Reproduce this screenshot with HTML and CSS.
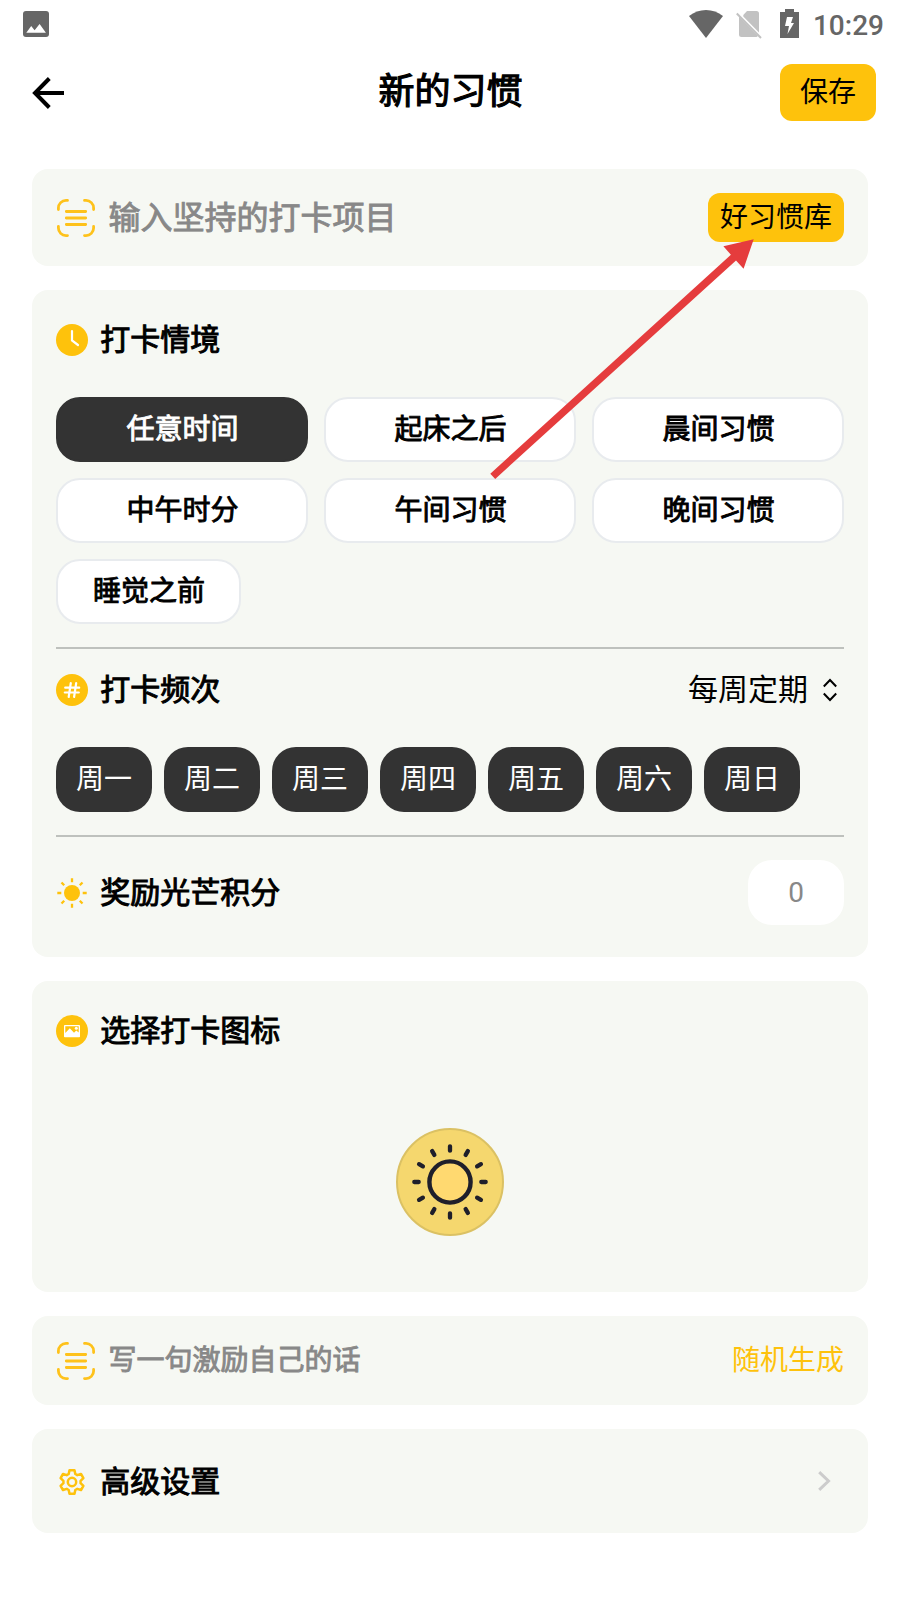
FILE: index.html
```html
<!DOCTYPE html>
<html lang="zh-CN">
<head>
  <meta charset="UTF-8" />
  <meta name="viewport" content="width=device-width, initial-scale=1.0"/>
  <title>新的习惯</title>
  <link rel="stylesheet" href="styles.css">
</head>
<body>

  <div class="status-bar">
    <svg width="26" height="26" viewBox="0 0 26 26">
      <rect width="26" height="26" rx="3" fill="#666"/>
      <path d="M3.300 21.700 8.200 15l3.400 4.200L16.600 13l6.300 8.700z" fill="#fff"/>
    </svg>
    <div class="status-right">
      <svg class="wifi" width="34" height="28" viewBox="0 0 34 28">
        <path d="M0 6Q7.500 0 17 0T34 6L17 28z" fill="#666"/>
      </svg>
      <svg class="sim" width="26" height="28" viewBox="0 0 26 28">
        <path d="M11 0h9.500a2.500 2.500 0 0 1 2.500 2.500V21.600L7.300 5.500V4zM3 5.500 22 25a3 3 0 0 1-1.500 1H5.500A2.500 2.500 0 0 1 3 23.500z" fill="#c2c2c2"/>
        <path d="M.8 2.500 25 27" stroke="#c2c2c2" stroke-width="2"/>
      </svg>
      <svg class="battery" width="19" height="29" viewBox="0 0 19 29">
        <path d="M0 3h5V0h9v3h5v26H0z" fill="#666"/>
        <path d="M7 8h6L11 14h3L7.500 25 9 17H5z" fill="#fff"/>
      </svg>
      <span class="time">10:29</span>
    </div>
  </div>

  <header class="header">
    <svg width="32" height="32" viewBox="0 0 32 32" fill="none" stroke="#000" stroke-width="4">
      <path d="M17.300 1.500 3 16l14.300 14.500M3 16h29"/>
    </svg>
    <h1>新的习惯</h1>
    <button class="save">保存</button>
  </header>

  <main class="container">
    <section class="card input-card">
      <svg class="scan" width="40" height="40" viewBox="0 0 40 40">
        <path d="M2.400 11.500V10A7.600 7.600 0 0 1 10 2.400h1.500M28.500 2.400H30A7.600 7.600 0 0 1 37.600 10v1.500M37.600 28.500V30A7.600 7.600 0 0 1 30 37.600h-1.500M11.500 37.600H10A7.600 7.600 0 0 1 2.400 30v-1.500M10.300 13.500h19.400M10.300 20h19.400M10.300 26.500h19.400"/>
      </svg>
      <span class="hint hint-big">输入坚持的打卡项目</span>
      <button class="library">好习惯库</button>
    </section>

    <section class="card settings">
      <div class="heading">
        <svg width="32" height="32" viewBox="0 0 32 32">
          <circle cx="16" cy="16" r="16" fill="#fec20c"/>
          <path d="M16 7v9.500l6 4.500" fill="none" stroke="#fff" stroke-width="2.200" stroke-linecap="round"/>
        </svg>
        <h2>打卡情境</h2>
      </div>
      <div class="scenes">
        <span class="chip active">任意时间</span>
        <span class="chip">起床之后</span>
        <span class="chip">晨间习惯</span>
        <span class="chip">中午时分</span>
        <span class="chip">午间习惯</span>
        <span class="chip">晚间习惯</span>
        <span class="chip last">睡觉之前</span>
      </div>

      <hr>

      <div class="heading heading-freq">
        <svg width="32" height="32" viewBox="0 0 32 32">
          <circle cx="16" cy="16" r="16" fill="#fec20c"/>
          <path d="M14.800 9 12.700 23M20.200 9 18.100 23M9.200 13.700h14M8.800 18.500h14" stroke="#fff" stroke-width="2.200" stroke-linecap="round"/>
        </svg>
        <h2>打卡频次</h2>
        <span class="period">每周定期</span>
        <svg class="updown" width="14" height="24" viewBox="0 0 14 24" fill="none" stroke="#000" stroke-width="2">
          <path d="M.8 8.500 7 2l6.200 6.500M.8 15.500 7 22l6.200-6.500"/>
        </svg>
      </div>
      <div class="days">
        <span class="day">周一</span>
        <span class="day">周二</span>
        <span class="day">周三</span>
        <span class="day">周四</span>
        <span class="day">周五</span>
        <span class="day">周六</span>
        <span class="day">周日</span>
      </div>

      <hr>

      <div class="heading heading-points">
        <svg width="32" height="32" viewBox="0 0 32 32">
          <circle cx="16" cy="16" r="8" fill="#fec20c"/>
          <path d="M16 1.300v4M16 26.700v4M1.300 16h4M26.700 16h4M5.500 5.500l2.700 2.700M23.800 23.800l2.700 2.700M5.500 26.500l2.700-2.700M23.800 8.200l2.700-2.700" stroke="#fec20c" stroke-width="2.300"/>
        </svg>
        <h2>奖励光芒积分</h2>
        <span class="points">0</span>
      </div>
    </section>

    <section class="card icon-card">
      <div class="heading">
        <svg width="32" height="32" viewBox="0 0 32 32">
          <circle cx="16" cy="16" r="16" fill="#fec20c"/>
          <rect x="8" y="10" width="16" height="12.300" rx=".8" fill="#fff"/>
          <path d="M9.300 11.200h13.400v6.300L20.300 15.600l-2.300 2.200-4.200-4.600-4.500 4.800z" fill="#fec20c"/>
          <circle cx="20.300" cy="13.300" r="1.500" fill="#fff"/>
        </svg>
        <h2>选择打卡图标</h2>
      </div>
      <svg class="habit-icon" width="108" height="108" viewBox="-54 -54 108 108">
        <circle r="53" fill="#f5d76e" stroke="#dbc163" stroke-width="2"/>
        <circle r="20.600" fill="#ffd970" stroke="#1f1f2b" stroke-width="4.400"/>
        <g stroke="#1f1f2b" stroke-width="4.300" stroke-linecap="round">
          <path d="M0-35.700V-31.300M0 35.700V31.300M-35.700 0H-31.300M35.700 0H31.300"/>
          <path d="M0-35.700V-31.300M0 35.700V31.300M-35.700 0H-31.300M35.700 0H31.300" transform="rotate(30)"/>
          <path d="M0-35.700V-31.300M0 35.700V31.300M-35.700 0H-31.300M35.700 0H31.300" transform="rotate(60)"/>
        </g>
      </svg>
    </section>

    <section class="card motto-card">
      <svg class="scan" width="40" height="40" viewBox="0 0 40 40">
        <path d="M2.400 11.500V10A7.600 7.600 0 0 1 10 2.400h1.500M28.500 2.400H30A7.600 7.600 0 0 1 37.600 10v1.500M37.600 28.500V30A7.600 7.600 0 0 1 30 37.600h-1.500M11.500 37.600H10A7.600 7.600 0 0 1 2.400 30v-1.500M10.300 13.500h19.400M10.300 20h19.400M10.300 26.500h19.400"/>
      </svg>
      <span class="hint">写一句激励自己的话</span>
      <span class="random">随机生成</span>
    </section>

    <section class="card more-card">
      <div class="heading">
        <svg class="gear" width="32" height="32" viewBox="-16 -16 32 32" fill="none" stroke="#fec20c" stroke-width="2.500" stroke-linejoin="round">
          <path d="M-3.300-8-2.500-11.800H2.500L3.300-8 5.280-6.860 9-8 11.400-3.900 8.580-1.140V1.140L11.400 3.900 9 8 5.280 6.860 3.300 8 2.500 11.800H-2.500L-3.300 8-5.280 6.860-9 8-11.400 3.900-8.580 1.140V-1.140L-11.400-3.900-9-8-5.280-6.860z"/>
          <circle r="4.200"/>
        </svg>
        <h2>高级设置</h2>
        <svg class="chevron" width="13" height="20" viewBox="0 0 13 20" fill="none" stroke="#ccc" stroke-width="3">
          <path d="M1.200 1.200 10.500 10l-9.300 8.800"/>
        </svg>
      </div>
    </section>
  </main>

  <!-- pointer to the habit library button -->
  <svg class="pointer" width="270" height="244" viewBox="488 237 270 244">
    <path d="M490.300 473.700 730.900 254.700 723.400 246.300 753.700 239.300 743.600 268.700 736 260.400 495.200 478.900z" fill="#e53c3d"/>
  </svg>

</body>
</html>
```

FILE: styles.css
```css
body {
  margin: 0;
  background: #fff;
  color: #000;
  font-family: Roboto, "Noto Sans CJK SC", sans-serif;
  line-height: 1.2;
  position: relative;
}

svg {
  display: block;
  flex-shrink: 0;
}

h1, h2 {
  margin: 0;
  font-weight: 400;
}

button {
  border: none;
  padding: 1px 0 0;
  background: #fec20c;
  color: #000;
  font-family: inherit;
  font-size: 28px;
  line-height: 32px;
  border-radius: 12px;
}

.status-bar {
  display: flex;
  align-items: center;
  justify-content: space-between;
  height: 48px;
  padding: 0 16px 0 23px;
}

.status-right {
  display: flex;
  align-items: center;
}

.sim {
  margin: 2px 0 0 13px;
}

.battery {
  margin: 0 0 1px 18px;
}

.time {
  margin: 3px 0 0 14px;
  font-size: 28px;
  line-height: 32px;
  font-weight: 500;
  color: #666;
}

.header {
  display: flex;
  align-items: center;
  justify-content: space-between;
  height: 89px;
  padding: 0 24px 0 32px;
}

.header h1 {
  margin: 1px 0 0 57px;
  font-size: 36px;
  -webkit-text-stroke: 1.2px #000;
}

.save {
  width: 96px;
  height: 57px;
}

.container {
  display: flex;
  flex-direction: column;
  gap: 24px;
  padding: 32px 32px 67px;
}

.card {
  box-sizing: border-box;
  background: #f6f8f3;
  border-radius: 16px;
  padding: 24px;
}

.input-card,
.motto-card {
  display: flex;
  align-items: center;
  height: 97px;
  padding: 0 24px;
}

.motto-card {
  height: 89px;
}

.scan {
  margin-top: 1px;
  fill: none;
  stroke: #fec21b;
  stroke-width: 2.8;
  stroke-linecap: round;
}

.hint {
  flex: 1;
  margin: 1px 0 0 12.5px;
  font-size: 28px;
  color: #888;
  -webkit-text-stroke: 0.9px #888;
}

.hint-big {
  font-size: 32px;
}

.library {
  width: 136px;
  height: 49px;
}

.random {
  margin-top: 1px;
  font-size: 28px;
  color: #fec20c;
}

.settings {
  padding-bottom: 32px;
}

.heading {
  display: flex;
  align-items: center;
  height: 52px;
}

.heading h2 {
  flex: 1;
  margin-left: 12.3px;
  font-size: 30px;
  -webkit-text-stroke: 1px #000;
}

.scenes {
  display: grid;
  grid-template-columns: repeat(3, 252px);
  gap: 16px;
  margin-top: 31px;
}

.chip {
  box-sizing: border-box;
  height: 65px;
  line-height: 61px;
  padding-left: 1px;
  border: 2px solid #e8ebee;
  border-radius: 24px;
  background: #fff;
  text-align: center;
  font-size: 28px;
  -webkit-text-stroke: 0.9px currentColor;
}

.chip.active {
  background: #333;
  border-color: #333;
  color: #fff;
}

.chip.last {
  width: 185px;
}

hr {
  height: 2px;
  margin: 23px 0;
  border: none;
  background: #bec1bd;
}

.heading-freq {
  margin-top: -8px;
}

.period {
  font-size: 30px;
}

.updown {
  margin: 0 7px 0 15px;
}

.days {
  display: flex;
  gap: 12px;
  margin-top: 31px;
}

.day {
  width: 96px;
  height: 65px;
  line-height: 65px;
  border-radius: 24px;
  background: #333;
  color: #fff;
  text-align: center;
  font-size: 28px;
}

.heading-points {
  height: 65px;
}

.points {
  width: 96px;
  height: 65px;
  line-height: 65px;
  border-radius: 24px;
  background: #fff;
  color: #888;
  text-align: center;
  font-size: 28px;
}

.icon-card {
  padding-bottom: 56px;
}

.habit-icon {
  margin: 71px auto 0;
}

.more-card {
  height: 104px;
  padding-top: 27px;
}

.chevron {
  margin: 0 13px 2px 0;
}

.pointer {
  position: absolute;
  left: 488px;
  top: 237px;
}
```
